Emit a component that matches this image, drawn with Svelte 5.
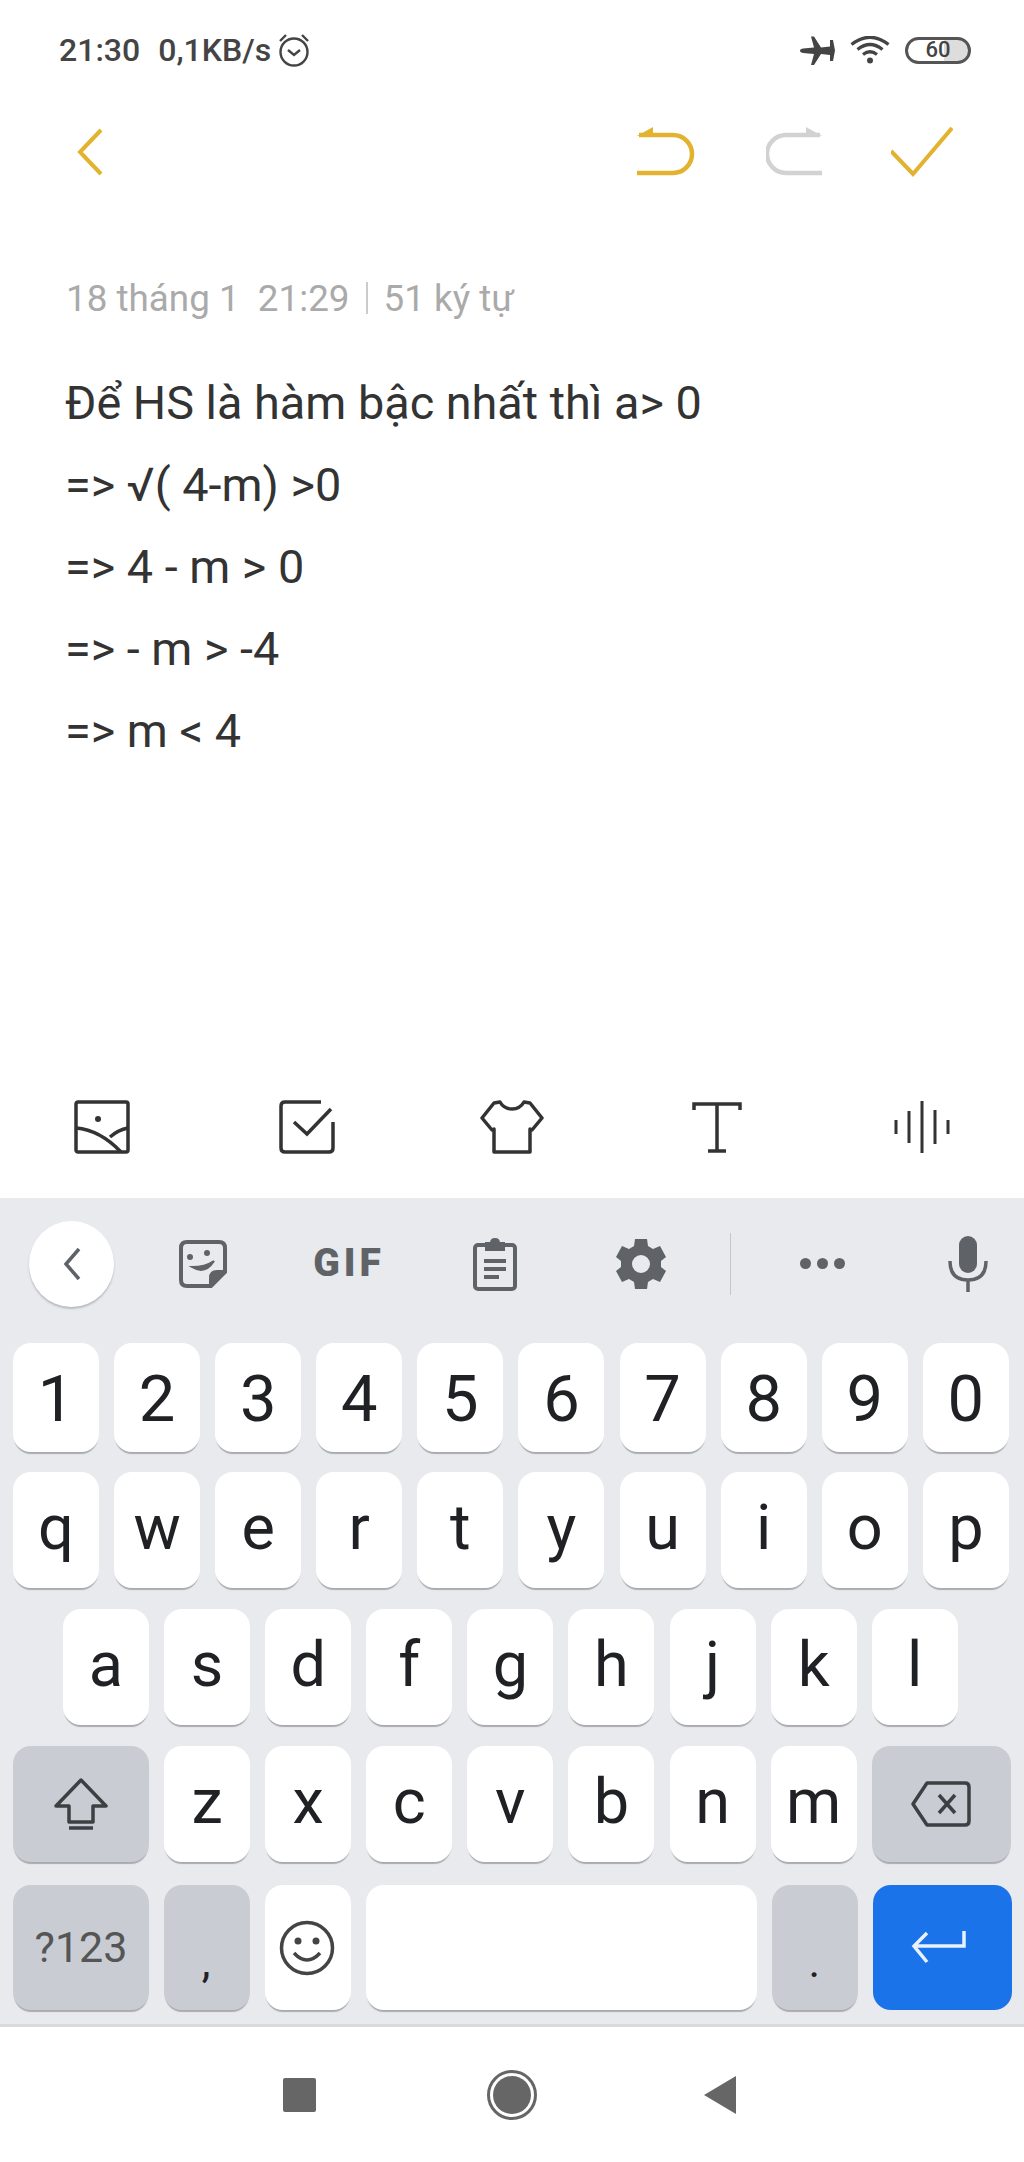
<script>
  const lines = ['Để HS là hàm bậc nhất thì a> 0', '=> √( 4-m) >0', '=> 4 - m > 0', '=> - m > -4', '=> m < 4']
  const digits = '1234567890'.split('')
  const row2 = 'qwertyuiop'.split('')
  const row3 = 'asdfghjkl'.split('')
  const row4 = 'zxcvbnm'.split('')
</script>

<div class="phone">
  <div class="status">
    <span class="time">21:30</span>
    <span class="net">0,1KB/s</span>
    <svg class="alarm" width="32" height="34" viewBox="0 0 32 34" fill="none" stroke="#444" stroke-width="2.4">
      <circle cx="16" cy="19" r="13.5" />
      <path d="M10 17l6 5 6-5" />
      <path d="M2 8l6-6M30 8l-6-6" />
    </svg>
    <span class="grow"></span>
    <svg class="plane" width="35" height="29" viewBox="0 0 35 29" fill="#444">
      <path d="M0 14.500q0-1.600 3-2l11-1-3-11h3l7 11 9-1V4h3l2 10.500-2 10.500h-3v-6l-9-1-7 11h-3l3-11-11-1q-3-.4-3-2z" />
    </svg>
    <svg class="wifi" width="40" height="28" viewBox="0 0 40 28" fill="none" stroke="#444" stroke-width="3.200">
      <path d="M1.500 8.500Q20-6 38.500 8.500" />
      <path d="M7.500 13.500Q20 3.500 32.500 13.500" />
      <path d="M13 18.500Q20 13 27 18.500" />
      <circle cx="20" cy="24.500" r="3" fill="#444" stroke="none" />
    </svg>
    <div class="battery"><span>60</span></div>
  </div>

  <div class="header">
    <svg width="26" height="48" viewBox="0 0 26 48" fill="none" stroke="#e3b22f" stroke-width="4">
      <path d="M24 2L3 24l21 22" />
    </svg>
    <span class="grow"></span>
    <svg width="58" height="50" viewBox="0 0 58 50" fill="none" stroke="#e3b22f" stroke-width="4.500">
      <path d="M2 8H36A19 19 0 0 1 36 46H0" />
      <path d="M0 9L16 0V9Z" fill="#e3b22f" stroke="none" />
    </svg>
    <svg class="redo" width="56" height="50" viewBox="0 0 56 50" fill="none" stroke="#d2d2d2" stroke-width="4.500">
      <path d="M54 8H20A19 19 0 0 0 20 46H56" />
      <path d="M56 9L40 0V9Z" fill="#d2d2d2" stroke="none" />
    </svg>
    <svg class="done" width="62" height="50" viewBox="0 0 62 50" fill="none" stroke="#e3b22f" stroke-width="4">
      <path d="M0 24L22 47 61 1" />
    </svg>
  </div>

  <div class="meta">
    <span>18 tháng 1&nbsp; 21:29</span>
    <i></i>
    <span>51 ký tự</span>
  </div>

  <div class="note">
    {#each lines as line}
      <div>{line}</div>
    {/each}
  </div>

  <div class="tools">
    <svg width="56" height="54" viewBox="0 0 56 54" fill="none" stroke="#333" stroke-width="3.500">
      <rect x="2" y="2" width="52" height="50" rx="2" />
      <path d="M2 28Q26 30 47 52M36 37Q44 30 54 28" />
      <circle cx="24" cy="19" r="3" fill="#333" stroke="none" />
    </svg>
    <svg width="56" height="54" viewBox="0 0 56 54" fill="none" stroke="#333" stroke-width="3.500">
      <path d="M42 2H6Q2 2 2 6V48Q2 52 6 52H50Q54 52 54 48V22" />
      <path d="M15 22L28 34 52 9" />
    </svg>
    <svg width="66" height="54" viewBox="0 0 66 54" fill="none" stroke="#333" stroke-width="3.500" stroke-linejoin="round">
      <path d="M21 2L15 3 3 18 13 30 15 29V52H51V29L53 30 63 18 51 3 45 2Q41 9 33 9T21 2Z" />
    </svg>
    <svg width="50" height="52" viewBox="0 0 50 52" fill="none" stroke="#333" stroke-width="3.500">
      <path d="M2 9V3H48V9M25 3V50M16 50H34" />
    </svg>
    <svg width="56" height="54" viewBox="0 0 56 54" fill="none" stroke="#333" stroke-width="3">
      <path d="M2 20V34M15 11V43M28 1V53M41 10V44M54 20V34" />
    </svg>
  </div>

  <div class="keyboard">
    <div class="strip">
      <div class="collapse">
        <svg width="18" height="34" viewBox="0 0 18 34" fill="none" stroke="#5f6368" stroke-width="3.500"><path d="M16 2L3 17l13 15" /></svg>
      </div>
      <div class="slot">
        <svg width="48" height="48" viewBox="0 0 48 48" fill="none" stroke="#5f6368" stroke-width="4">
          <path d="M8 2H40Q46 2 46 8V32L32 46H8Q2 46 2 40V8Q2 2 8 2Z" />
          <path d="M32 46V38Q32 32 38 32H46" fill="#5f6368" />
          <path d="M13 27Q26 35 35 21Q26 27 13 27Z" fill="#5f6368" stroke-width="2" />
          <circle cx="11" cy="17" r="3" fill="#5f6368" stroke="none" />
          <circle cx="28" cy="13" r="3" fill="#5f6368" stroke="none" />
        </svg>
      </div>
      <div class="slot"><span class="gif">GIF</span></div>
      <div class="slot">
        <svg width="44" height="54" viewBox="0 0 44 54" fill="none" stroke="#5f6368" stroke-width="4">
          <rect x="2" y="8" width="40" height="44" rx="3" />
          <path d="M13 6H18Q18 2 22 2T26 6H31V13H13Z" fill="#5f6368" stroke-width="2" />
          <path d="M11 24H33M11 32H33M11 40H26" />
        </svg>
      </div>
      <div class="slot">
        <svg width="50" height="50" viewBox="0 0 50 50" fill="#5f6368">
          <path fill-rule="evenodd" d="M19 0H31L32 7 37 10 44 7 50 18 45 22V28L50 32 44 43 37 40 32 43 31 50H19L18 43 13 40 6 43 0 32 5 28V22L0 18 6 7 13 10 18 7ZM25 16A9 9 0 1 0 25 34 9 9 0 1 0 25 16Z" />
        </svg>
      </div>
      <i class="rule"></i>
      <div class="slot dots"><b></b><b></b><b></b></div>
      <div class="slot mic">
        <svg width="40" height="56" viewBox="0 0 40 56" fill="none" stroke="#5f6368" stroke-width="3.500">
          <rect x="11" y="0" width="18" height="37" rx="9" fill="#5f6368" stroke="none" />
          <path d="M2 25Q2 44 20 44T38 25M20 44V56" />
        </svg>
      </div>
    </div>

    <div class="row row-digits">
      {#each digits as k}<div class="key digit">{k}</div>{/each}
    </div>
    <div class="row row-letters">
      {#each row2 as k}<div class="key letter">{k}</div>{/each}
    </div>
    <div class="row row-letters home">
      {#each row3 as k}<div class="key letter">{k}</div>{/each}
    </div>
    <div class="row row-letters">
      <div class="key fn wide">
        <svg width="54" height="52" viewBox="0 0 54 52" fill="none" stroke="#3c4043" stroke-width="3.500" stroke-linejoin="round">
          <path d="M27 2L52 28H39V44H15V28H2Z" />
          <path d="M15 50H39" />
        </svg>
      </div>
      {#each row4 as k}<div class="key letter">{k}</div>{/each}
      <div class="key fn wide end">
        <svg width="60" height="48" viewBox="0 0 60 48" fill="none" stroke="#3c4043" stroke-width="3.500" stroke-linejoin="round">
          <path d="M16 3H54Q58 3 58 7V41Q58 45 54 45H16L2 24Z" />
          <path d="M28 15L44 33M44 15L28 33" />
        </svg>
      </div>
    </div>
    <div class="row row-bottom">
      <div class="key fn wide sym">?123</div>
      <div class="key fn punct">,</div>
      <div class="key smile">
        <svg width="56" height="58" viewBox="0 0 56 58" fill="none" stroke="#444" stroke-width="3.500">
          <circle cx="28" cy="29" r="25.500" />
          <path d="M15 34Q28 48 41 34" />
          <circle cx="19" cy="22" r="3.500" fill="#444" stroke="none" />
          <circle cx="37" cy="22" r="3.500" fill="#444" stroke="none" />
        </svg>
      </div>
      <div class="key space"></div>
      <div class="key fn punct">.</div>
      <div class="key enter wide end">
        <svg width="55" height="33" viewBox="0 0 55 33" fill="none" stroke="#e8f1fe" stroke-width="3.500">
          <path d="M53 0V15H3M16 2L3 15l13 16" />
        </svg>
      </div>
    </div>
  </div>

  <div class="nav">
    <span class="square"></span>
    <span class="home-btn"><span></span></span>
    <svg width="32" height="38" viewBox="0 0 32 38" fill="#666"><path d="M32 0V38L0 19Z" /></svg>
  </div>
</div>

<style>
  :global(body) {
    margin: 0;
    background: #fff;
  }

  .phone {
    width: 1024px;
    height: 2162px;
    display: flex;
    flex-direction: column;
    font-family: Roboto, "Noto Sans", sans-serif;
    overflow: hidden;
  }

  .grow {
    flex: 1;
  }

  .status {
    height: 100px;
    flex: none;
    display: flex;
    align-items: center;
    padding: 0 53px 0 59px;
    color: #444;
    font-size: 32px;
    font-weight: 500;
  }

  .net {
    margin-left: 18px;
  }

  .alarm {
    margin-left: 7px;
  }

  .wifi {
    margin-left: 15px;
  }

  .battery {
    width: 66px;
    height: 27px;
    margin-left: 15px;
    box-sizing: border-box;
    border: 3px solid #555;
    border-radius: 14px;
    background: linear-gradient(90deg, #fff 60%, #ddd 60%);
    display: flex;
    align-items: center;
    justify-content: center;
    font-size: 22px;
    line-height: 1;
  }

  .header {
    height: 104px;
    flex: none;
    display: flex;
    align-items: center;
    padding: 0 71px 0 77px;
  }

  .redo {
    margin-left: 71px;
  }

  .done {
    margin-left: 69px;
  }

  .meta {
    flex: none;
    height: 48px;
    margin-top: 70px;
    padding-left: 66px;
    display: flex;
    align-items: center;
    gap: 16px;
    color: #aaa;
    font-size: 36.8px;
  }

  .meta i {
    width: 2px;
    height: 32px;
    background: #ccc;
  }

  .note {
    flex: 1;
    padding: 40px 0 0 65px;
    color: #333;
    font-size: 46.8px;
    line-height: 82px;
  }

  .tools {
    flex: none;
    height: 54px;
    padding-bottom: 44px;
    display: grid;
    grid-template-columns: repeat(5, 1fr);
    justify-items: center;
    align-items: center;
  }

  .keyboard {
    flex: none;
    height: 829px;
    box-sizing: border-box;
    background: #e8eaed;
    border-bottom: 3px solid #d9dadc;
  }

  .strip {
    height: 131px;
    padding-bottom: 14px;
    display: flex;
    align-items: center;
    padding-left: 29px;
  }

  .collapse {
    width: 85px;
    height: 86px;
    border-radius: 50%;
    background: #fff;
    box-shadow: 0 2px 2px #b9bbc0;
    display: flex;
    align-items: center;
    justify-content: center;
    margin-right: 16px;
  }

  .slot {
    width: 146px;
    display: flex;
    align-items: center;
    justify-content: center;
  }

  .gif {
    font-size: 39px;
    font-weight: 900;
    letter-spacing: 4px;
    color: #5f6368;
    line-height: 1;
  }

  .rule {
    width: 1px;
    height: 62px;
    margin-left: 16px;
    background: #c4c6ca;
  }

  .dots {
    width: 183px;
    gap: 6px;
  }

  .dots b {
    width: 11px;
    height: 11px;
    border-radius: 50%;
    background: #5f6368;
  }

  .mic {
    width: 108px;
  }

  .row {
    display: flex;
    gap: 15.1px;
    padding: 0 12px 0 13px;
    margin-bottom: 21px;
  }

  .row-digits {
    height: 109px;
    margin-bottom: 20px;
  }

  .row-letters {
    height: 116px;
  }

  .row-bottom {
    height: 125px;
    margin: 23px 0 0;
  }

  .home {
    padding-left: 63px;
  }

  .key {
    width: 86px;
    flex: none;
    box-sizing: border-box;
    border-radius: 18px;
    background: #fff;
    box-shadow: 0 3px 1px -1px #a9abb1;
    display: flex;
    align-items: center;
    justify-content: center;
    color: #202124;
    font-size: 63px;
    line-height: 1;
  }

  .digit {
    font-size: 65px;
    padding-top: 4px;
  }

  .letter {
    padding-bottom: 5px;
  }

  .smile {
    padding-right: 2px;
  }

  .fn {
    background: #c9ccd3;
  }

  .wide {
    width: 136px;
  }

  .end {
    width: 139px;
  }

  .sym {
    font-size: 43px;
    color: #555;
  }

  .punct {
    font-size: 44px;
    align-items: flex-end;
    padding-bottom: 26px;
    padding-right: 2px;
  }

  .space {
    width: 391px;
  }

  .enter {
    background: #1a73e8;
    box-shadow: none;
    padding-right: 8px;
  }

  .nav {
    flex: none;
    height: 135px;
    display: flex;
    align-items: center;
    padding-left: 283px;
  }

  .square {
    width: 33px;
    height: 34px;
    background: #666;
    border-radius: 2px;
  }

  .home-btn {
    width: 50px;
    height: 50px;
    margin-left: 171px;
    box-sizing: border-box;
    border: 3px solid #666;
    border-radius: 50%;
    display: flex;
    align-items: center;
    justify-content: center;
  }

  .home-btn span {
    width: 38px;
    height: 38px;
    border-radius: 50%;
    background: #666;
  }

  .nav svg {
    margin-left: 167px;
  }
</style>
